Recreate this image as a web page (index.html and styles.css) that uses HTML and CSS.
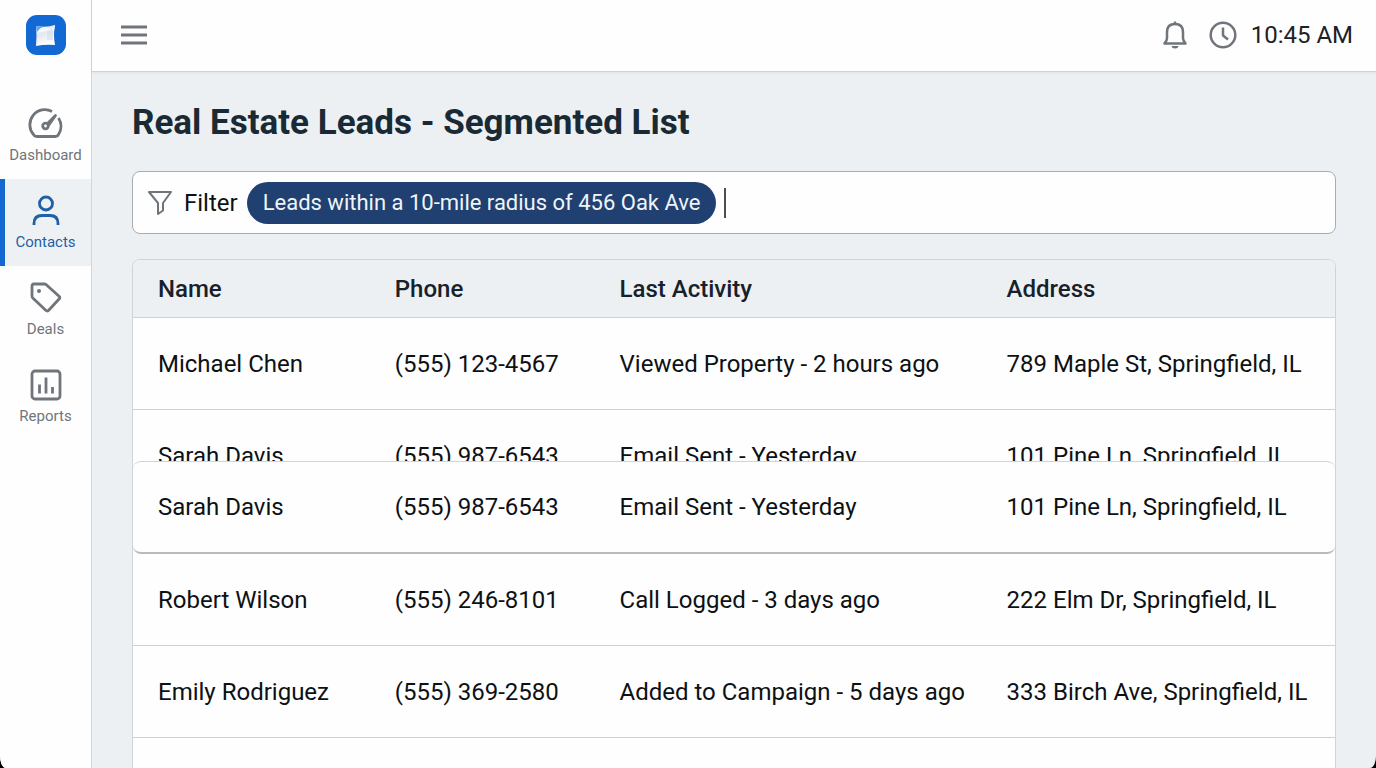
FILE: index.html
```html
<!DOCTYPE html>
<html lang="en">
  <head>
    <meta charset="UTF-8" />
    <meta name="viewport" content="width=device-width, initial-scale=1.0" />
    <title>Real Estate Leads</title>
    <link rel="stylesheet" href="styles.css" />
  </head>
  <body>
    <div class="app">
      <aside class="sidebar">
        <a href="#" class="logo" aria-label="Home">
          <svg width="40" height="40" viewBox="0 0 40 40">
            <defs>
              <linearGradient id="paper" x1="0" y1="0" x2="0.4" y2="1">
                <stop offset="0" stop-color="#cfe6fa" />
                <stop offset="0.5" stop-color="#e4eaf2" />
                <stop offset="1" stop-color="#ffffff" />
              </linearGradient>
            </defs>
            <rect width="40" height="40" rx="11" fill="#1269d3" />
            <path d="M10 11q10 2 19-1q-2 10 0 20q-9-1-19 1q1-10 0-20z" fill="url(#paper)" />
            <path d="M10 11q4 1 7 1q-4 1-6 6z" fill="#5aa5ee" />
            <path d="M11 17q4-5 9-5l5 2 4-4-1 6q-9 0-17 2z" fill="#f2f8fd" />
            <path d="M21 16l5-2 1 2v9h-6z" fill="#d3dbe7" opacity="0.6" />
          </svg>
        </a>
        <nav>
          <a href="#">
            <svg width="36" height="36" viewBox="0 0 36 36">
              <path d="M24 5.500A15 15 0 0 0 5.500 28.500Q6.500 30.500 8.500 30.500H27.500Q29.500 30.500 30.500 28.500A15 15 0 0 0 30.500 12" />
              <circle cx="17.500" cy="20" r="2.800" />
              <path d="M19.500 17.500L27.500 9.500L20.500 19.500" />
            </svg>
            <span>Dashboard</span>
          </a>
          <a href="#" class="active">
            <svg width="36" height="36" viewBox="0 0 36 36">
              <circle cx="18" cy="10.500" r="6.500" />
              <path d="M6 32V30.500Q6 22.500 14 22.500H22Q30 22.500 30 30.500V32" />
            </svg>
            <span>Contacts</span>
          </a>
          <a href="#">
            <svg width="36" height="36" viewBox="0 0 36 36">
              <path d="M6 4H16.500Q17.500 4 18.300 4.800L31.300 16.500Q32.300 17.500 31.300 18.800L20.500 30.500Q19.300 31.500 18 30.500L5 18.200Q4 17.300 4 16V6Q4 4 6 4Z" />
              <circle cx="11" cy="11" r="2" class="solid" />
            </svg>
            <span>Deals</span>
          </a>
          <a href="#">
            <svg width="36" height="36" viewBox="0 0 36 36">
              <rect x="4" y="4" width="28" height="28" rx="3" />
              <path d="M11.500 17.500V26.500M18 10.500V26.500M24.500 20V26.500" />
            </svg>
            <span>Reports</span>
          </a>
        </nav>
      </aside>

      <div class="content">
        <header>
          <button class="menu" aria-label="Menu">
            <svg width="26" height="20" viewBox="0 0 26 20">
              <path d="M0 2H26M0 10H26M0 18H26" />
            </svg>
          </button>
          <div class="status">
            <button aria-label="Notifications">
              <svg width="28" height="30" viewBox="0 0 28 30">
                <path d="M14 1.500V4M3.500 23.500H24.500Q22 21 22 18V12Q22 4 14 4T6 12V18Q6 21 3.500 23.500Z" />
                <path d="M10.500 26H17.500Q17 28.500 14 28.500T10.500 26Z" class="solid" />
              </svg>
            </button>
            <svg width="28" height="28" viewBox="0 0 28 28">
              <circle cx="14" cy="14" r="12.300" />
              <path d="M14 6.500V14.500L19 18.500" />
            </svg>
            <time>10:45 AM</time>
          </div>
        </header>

        <main>
          <h1>Real Estate Leads - Segmented List</h1>

          <div class="filter">
            <svg width="26" height="26" viewBox="0 0 26 26">
              <path d="M2 2H24L16 13V20.500L11 24V13Z" />
            </svg>
            <label for="filter">Filter</label>
            <button class="chip">Leads within a 10-mile radius of 456 Oak Ave</button>
            <span class="caret"></span>
            <input type="text" id="filter" />
          </div>

          <div class="list">
            <table>
              <thead>
                <tr>
                  <th class="name">Name</th>
                  <th class="phone">Phone</th>
                  <th class="activity">Last Activity</th>
                  <th>Address</th>
                </tr>
              </thead>
              <tbody>
                <tr>
                  <td>Michael Chen</td>
                  <td>(555) 123-4567</td>
                  <td>Viewed Property - 2 hours ago</td>
                  <td>789 Maple St, Springfield, IL</td>
                </tr>
                <tr class="covered">
                  <td><div>Sarah Davis</div></td>
                  <td><div>(555) 987-6543</div></td>
                  <td><div>Email Sent - Yesterday</div></td>
                  <td><div>101 Pine Ln, Springfield, IL</div></td>
                </tr>
                <tr class="lifted">
                  <td>Sarah Davis</td>
                  <td>(555) 987-6543</td>
                  <td>Email Sent - Yesterday</td>
                  <td>101 Pine Ln, Springfield, IL</td>
                </tr>
                <tr>
                  <td>Robert Wilson</td>
                  <td>(555) 246-8101</td>
                  <td>Call Logged - 3 days ago</td>
                  <td>222 Elm Dr, Springfield, IL</td>
                </tr>
                <tr>
                  <td>Emily Rodriguez</td>
                  <td>(555) 369-2580</td>
                  <td>Added to Campaign - 5 days ago</td>
                  <td>333 Birch Ave, Springfield, IL</td>
                </tr>
                <tr>
                  <td></td>
                  <td></td>
                  <td></td>
                  <td></td>
                </tr>
              </tbody>
            </table>
          </div>
        </main>
      </div>
    </div>
  </body>
</html>
```

FILE: styles.css
```css
* {
  box-sizing: border-box;
}
html {
  background-color: #000;
}
body {
  margin: 0;
  font-family: Roboto, "Liberation Sans", sans-serif;
  font-size: 24px;
  line-height: 32px;
  color: #0d1114;
}
button {
  background: none;
  border: none;
  padding: 0;
  font: inherit;
  color: inherit;
}
svg {
  display: block;
  flex: none;
  fill: none;
  stroke: #70757b;
  stroke-width: 2.5;
  stroke-linejoin: round;
}
svg .solid {
  fill: #70757b;
  stroke: none;
}
.app {
  display: flex;
  height: 100vh;
  overflow: hidden;
  background-color: #ecf0f2;
  border-radius: 0 0 6px 6px / 0 0 12px 12px;
}

/* sidebar */
.sidebar {
  width: 92px;
  flex: none;
  background-color: #fefefe;
  border-right: 1px solid #d3d7db;
}
.logo {
  display: flex;
  justify-content: center;
  padding: 15px 0 37px;
}
.logo svg {
  stroke: none;
}
nav a {
  display: flex;
  flex-direction: column;
  align-items: center;
  gap: 2px;
  height: 87px;
  padding-top: 14px;
  font-size: 15px;
  line-height: 22px;
  color: #70757b;
  text-decoration: none;
}
nav svg {
  stroke-width: 2.8;
}
nav .active {
  background-color: #eef1f4;
  box-shadow: inset 5px 0 #1467cf;
  color: #1f5fa6;
}
nav .active svg {
  stroke: #1f5fa6;
}

/* top bar */
.content {
  flex: 1;
  min-width: 0;
}
header {
  display: flex;
  justify-content: space-between;
  align-items: center;
  height: 72px;
  padding: 0 23px 2px 29px;
  background-color: #fefefe;
  border-bottom: 1px solid #cfd3d6;
  box-shadow: 0 1px 3px #0000000f;
}
.menu svg {
  stroke-width: 3;
}
.status {
  display: flex;
  align-items: center;
  gap: 14px;
}
.status button {
  margin-right: 6px;
}
time {
  color: #1c2227;
}

/* page */
main {
  padding: 30px 40px 0;
}
h1 {
  margin: 0 0 27px;
  font-size: 35px;
  line-height: 42px;
  font-weight: 700;
  color: #1a2a35;
}
.filter {
  display: flex;
  align-items: center;
  height: 63px;
  margin-bottom: 25px;
  padding: 0 14px;
  background-color: #fefefe;
  border: 1px solid #a9adb0;
  border-radius: 8px;
}
.filter svg {
  stroke-width: 2;
}
.filter label {
  margin: 0 9px 0 11px;
}
.chip {
  height: 42px;
  padding: 0 16px;
  border-radius: 21px;
  background-color: #1f4070;
  font-size: 22px;
  color: #f0f4f8;
}
.caret {
  width: 2px;
  height: 30px;
  margin-left: 8px;
  background-color: #4a4f54;
}
.filter input {
  flex: 1;
  min-width: 0;
  border: none;
  outline: none;
  background: none;
  font: inherit;
}

/* leads table */
.list {
  border: 1px solid #d0d4d7;
  border-radius: 8px;
  background-color: #fefefe;
}
table {
  width: 100%;
  table-layout: fixed;
  border-collapse: separate;
  border-spacing: 0;
}
.name {
  width: 19.7%;
}
.phone {
  width: 18.7%;
}
.activity {
  width: 32.2%;
}
th {
  height: 58px;
  padding: 0 0 0 25px;
  background-color: #ecf0f2;
  border-bottom: 1px solid #cfd2d5;
  font-weight: 500;
  text-align: left;
  color: #16212b;
}
th:first-child {
  border-top-left-radius: 8px;
}
th:last-child {
  border-top-right-radius: 8px;
}
td {
  height: 92px;
  padding: 0 0 0 25px;
  border-bottom: 1px solid #cfd2d5;
  white-space: nowrap;
}
.covered td {
  height: 51px;
  padding-top: 30px;
  border-bottom: none;
  vertical-align: top;
}
.covered div {
  height: 21px;
}
/* row being dragged over the one above it */
.lifted td {
  position: relative;
  z-index: 1;
  height: 93px;
  background-color: #fefefe;
  border-top: 1px solid #d0d4d7;
  border-bottom: 2px solid #b9bcbf;
}
.lifted td:first-child {
  border-radius: 8px 0 0 8px;
}
.lifted td:last-child {
  border-radius: 0 8px 8px 0;
}
```
